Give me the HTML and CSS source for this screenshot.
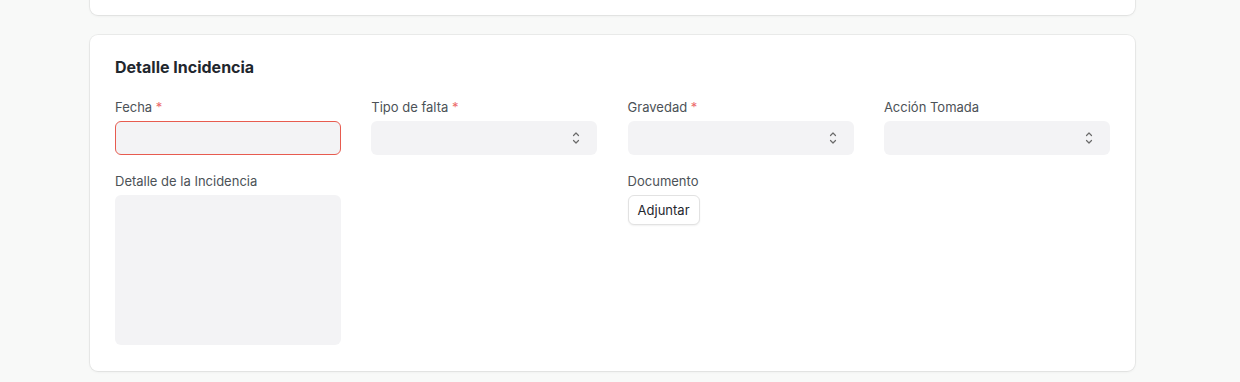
FILE: index.html
```html
<!DOCTYPE html>
<html lang="es">
<head>
    <meta charset="UTF-8">
    <meta name="viewport" content="width=device-width, initial-scale=1.0">
    <title>Detalle Incidencia</title>
    <link rel="stylesheet" href="styles.css">
</head>
<body>
    <main class="page">
        <!-- Tarjeta anterior (cortada arriba) -->
        <section class="card card-prev"></section>

        <section class="card">
            <h2 class="card-title">Detalle Incidencia</h2>

            <div class="form-grid">
                <div class="field">
                    <label>Fecha <span class="req">*</span></label>
                    <input type="text" class="control control-error">
                </div>
                <div class="field">
                    <label>Tipo de falta <span class="req">*</span></label>
                    <div class="control select">
                        <svg class="chev" width="8" height="14" viewBox="0 0 8 14" fill="none" stroke="#6b6b6b" stroke-width="1.2" stroke-linecap="round" stroke-linejoin="round">
                            <path d="M1.5 4.5 L4 2 L6.5 4.5"/>
                            <path d="M1.5 9.5 L4 12 L6.5 9.5"/>
                        </svg>
                    </div>
                </div>
                <div class="field">
                    <label>Gravedad <span class="req">*</span></label>
                    <div class="control select">
                        <svg class="chev" width="8" height="14" viewBox="0 0 8 14" fill="none" stroke="#6b6b6b" stroke-width="1.2" stroke-linecap="round" stroke-linejoin="round">
                            <path d="M1.5 4.5 L4 2 L6.5 4.5"/>
                            <path d="M1.5 9.5 L4 12 L6.5 9.5"/>
                        </svg>
                    </div>
                </div>
                <div class="field">
                    <label>Acción Tomada</label>
                    <div class="control select">
                        <svg class="chev" width="8" height="14" viewBox="0 0 8 14" fill="none" stroke="#6b6b6b" stroke-width="1.2" stroke-linecap="round" stroke-linejoin="round">
                            <path d="M1.5 4.5 L4 2 L6.5 4.5"/>
                            <path d="M1.5 9.5 L4 12 L6.5 9.5"/>
                        </svg>
                    </div>
                </div>

                <div class="field">
                    <label>Detalle de la Incidencia</label>
                    <textarea class="control textarea"></textarea>
                </div>
                <div class="field"></div>
                <div class="field">
                    <label>Documento</label>
                    <div>
                        <button class="btn">Adjuntar</button>
                    </div>
                </div>
                <div class="field"></div>
            </div>
        </section>
    </main>
</body>
</html>
```

FILE: styles.css
```css
/* Base */
body {
    margin: 0;
    background-color: #f8f9f8;
    font-family: Inter, "Noto Sans", sans-serif;
    color: #1f272e;
}

.page {
    width: 1045px;
    margin-left: 90px;
}

/* Cards */
.card {
    background-color: #ffffff;
    border-radius: 8px;
    box-shadow: 0 0 0 1px rgba(0, 0, 0, 0.05), 0 1px 3px rgba(0, 0, 0, 0.06);
    padding: 20px 25px 26px 25px;
    margin-bottom: 20px;
}

.card-prev {
    height: 40px;
    padding: 0;
    margin-top: -25px;
}

.card-title {
    margin: 0 0 20px 0;
    font-size: 16px;
    line-height: 24px;
    font-weight: 700;
    color: #1f272e;
}

/* Form */
.form-grid {
    display: grid;
    grid-template-columns: repeat(4, 226px);
    column-gap: 30.3px;
    row-gap: 18px;
}

.field label {
    display: block;
    font-size: 13px;
    line-height: 16px;
    color: #4c5257;
    margin-bottom: 6px;
}

.req {
    color: #ec6a6a;
}

.control {
    display: block;
    box-sizing: border-box;
    width: 100%;
    height: 34px;
    background-color: #f3f3f5;
    border: 1px solid transparent;
    border-radius: 6px;
    font-family: inherit;
    font-size: 13px;
    outline: none;
}

.control-error {
    border-color: #e75b4f;
}

.select {
    position: relative;
}

.chev {
    position: absolute;
    right: 16px;
    top: 9px;
}

.textarea {
    height: 150px;
    resize: none;
}

.btn {
    font-family: inherit;
    font-size: 13px;
    line-height: 20px;
    color: #1f272e;
    background-color: #ffffff;
    border: 1px solid #e2e2e2;
    border-radius: 6px;
    box-shadow: 0 1px 2px rgba(0, 0, 0, 0.06);
    padding: 4px 9px;
    height: 30px;
    cursor: pointer;
}
```
